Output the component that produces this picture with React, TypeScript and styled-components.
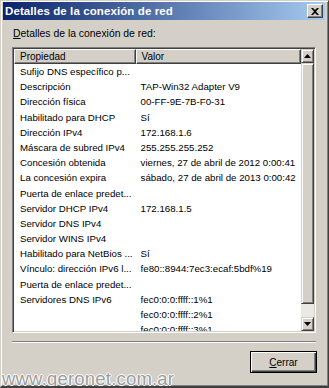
import styled, { createGlobalStyle } from "styled-components";

const rows: [string, string][] = [
  ["Sufijo DNS específico p...", ""],
  ["Descripción", "TAP-Win32 Adapter V9"],
  ["Dirección física", "00-FF-9E-7B-F0-31"],
  ["Habilitado para DHCP", "Sí"],
  ["Dirección IPv4", "172.168.1.6"],
  ["Máscara de subred IPv4", "255.255.255.252"],
  ["Concesión obtenida", "viernes, 27 de abril de 2012 0:00:41"],
  ["La concesión expira", "sábado, 27 de abril de 2013 0:00:42"],
  ["Puerta de enlace predet...", ""],
  ["Servidor DHCP IPv4", "172.168.1.5"],
  ["Servidor DNS IPv4", ""],
  ["Servidor WINS IPv4", ""],
  ["Habilitado para NetBios ...", "Sí"],
  ["Vínculo: dirección IPv6 l...", "fe80::8944:7ec3:ecaf:5bdf%19"],
  ["Puerta de enlace predet...", ""],
  ["Servidores DNS IPv6", "fec0:0:0:ffff::1%1"],
  ["", "fec0:0:0:ffff::2%1"],
  ["", "fec0:0:0:ffff::3%1"],
];

const NAME_COL = 122;
const VALUE_COL = 166;

const GlobalStyle = createGlobalStyle`
  html, body {
    margin: 0;
    padding: 0;
    background: #d4d0c8;
  }
`;

export default function App() {
  return (
    <>
      <GlobalStyle />
      <Window>
        <TitleBar>
          <Title>Detalles de la conexión de red</Title>
          <CloseButton>
            <svg width="8" height="7" viewBox="0 0 8 7">
              <path d="M0 0h2l2 2 2-2h2L5 3.5 8 7H6L4 5 2 7H0l3-3.5z" fill="#000" />
            </svg>
          </CloseButton>
        </TitleBar>
        <Body>
          <Label>
            <u>D</u>etalles de la conexión de red:
          </Label>
          <ListView>
            <ListArea>
              <HeaderRow>
                <HeaderCell $width={NAME_COL}>Propiedad</HeaderCell>
                <HeaderCell $width={VALUE_COL}>Valor</HeaderCell>
              </HeaderRow>
              <Rows>
                {rows.map(([name, value], i) => (
                  <Row key={i}>
                    <Cell $width={NAME_COL}>{name}</Cell>
                    <Cell $width={VALUE_COL} $value>
                      {value}
                    </Cell>
                  </Row>
                ))}
              </Rows>
            </ListArea>
            <ScrollBar>
              <ArrowButton>
                <svg width="7" height="4" viewBox="0 0 7 4">
                  <path d="M3.5 0L7 4H0z" fill="#000" />
                </svg>
              </ArrowButton>
              <Thumb />
              <Track />
              <ArrowButton>
                <svg width="7" height="4" viewBox="0 0 7 4">
                  <path d="M0 0h7L3.5 4z" fill="#000" />
                </svg>
              </ArrowButton>
            </ScrollBar>
          </ListView>
          <Separator />
          <Footer>
            <Watermark>www.geronet.com.ar</Watermark>
            <DefaultButton>
              <u>C</u>errar
            </DefaultButton>
          </Footer>
        </Body>
      </Window>
    </>
  );
}

const Window = styled.div`
  width: 329px;
  height: 388px;
  box-sizing: border-box;
  display: flex;
  flex-direction: column;
  background: #d4d0c8;
  border-top: 1px solid #d4d0c8;
  border-left: 1px solid #d4d0c8;
  border-right: 1px solid #404040;
  border-bottom: 2px solid #404040;
  box-shadow: inset 1px 1px 0 #fff, inset -1px -1px 0 #808080;
  padding: 1px 3px 0 2px;
  font-family: "Liberation Sans", Arial, sans-serif;
  overflow: hidden;
`;

const TitleBar = styled.div`
  height: 18px;
  flex: none;
  display: flex;
  align-items: center;
  justify-content: space-between;
  padding: 0 2px 0 2px;
  background: linear-gradient(to right, #0a246a, #a6caf0);
`;

const Title = styled.div`
  color: #fff;
  font-weight: bold;
  font-size: 11.5px;
  letter-spacing: 0.1px;
`;

const CloseButton = styled.div`
  width: 14px;
  height: 12px;
  display: flex;
  align-items: center;
  justify-content: center;
  background: #d4d0c8;
  border: 1px solid;
  border-color: #fff #404040 #404040 #fff;
  box-shadow: inset -1px -1px 0 #808080;
`;

const Body = styled.div`
  flex: 1;
  display: flex;
  flex-direction: column;
  padding: 8px 9px 0 9px;
`;

const Label = styled.div`
  font-size: 10.4px;
  color: #000;
  height: 12px;
  line-height: 12px;
  margin-bottom: 7px;
  margin-left: 1px;
`;

const ListView = styled.div`
  height: 286px;
  flex: none;
  display: flex;
  box-sizing: border-box;
  border: 1px solid;
  border-color: #808080 #fff #fff #808080;
  box-shadow: inset 1px 1px 0 #404040, inset -1px -1px 0 #d4d0c8;
  padding: 1px;
  background: #fff;
`;

const ListArea = styled.div`
  flex: 1;
  overflow: hidden;
  display: flex;
  flex-direction: column;
`;

const HeaderRow = styled.div`
  display: flex;
  height: 15px;
  flex: none;
  background: #d4d0c8;
`;

const HeaderCell = styled.div<{ $width: number }>`
  width: ${(p) => p.$width}px;
  box-sizing: border-box;
  border: 1px solid;
  border-color: #fff #404040 #404040 #fff;
  box-shadow: inset -1px -1px 0 #808080;
  font-size: 10px;
  line-height: 13px;
  padding-left: 5px;
  color: #000;
  white-space: nowrap;
  overflow: hidden;
`;

const Rows = styled.div`
  flex: 1;
  overflow: hidden;
`;

const Row = styled.div`
  display: flex;
  height: 15.2px;
  line-height: 15.2px;
`;

const Cell = styled.div<{ $width: number; $value?: boolean }>`
  width: ${(p) => p.$width}px;
  padding-left: ${(p) => (p.$value ? "5px" : "6px")};
  box-sizing: border-box;
  font-size: ${(p) => (p.$value ? "9.7px" : "9.7px")};
  color: #000;
  white-space: nowrap;
  overflow: hidden;
`;

const ScrollBar = styled.div`
  width: 13px;
  flex: none;
  display: flex;
  flex-direction: column;
`;

const ArrowButton = styled.div`
  height: 14px;
  flex: none;
  box-sizing: border-box;
  display: flex;
  align-items: center;
  justify-content: center;
  background: #d4d0c8;
  border: 1px solid;
  border-color: #d4d0c8 #404040 #404040 #d4d0c8;
  box-shadow: inset 1px 1px 0 #fff, inset -1px -1px 0 #808080;
`;

const Thumb = styled.div`
  height: 241px;
  flex: none;
  box-sizing: border-box;
  background: #d4d0c8;
  border: 1px solid;
  border-color: #d4d0c8 #404040 #404040 #d4d0c8;
  box-shadow: inset 1px 1px 0 #fff, inset -1px -1px 0 #808080;
`;

const Track = styled.div`
  flex: 1;
  background: #ebe9e4;
`;

const Separator = styled.div`
  margin-top: 8px;
  height: 0;
  border-top: 1px solid #808080;
  border-bottom: 1px solid #fff;
`;

const Footer = styled.div`
  flex: 1;
  display: flex;
  justify-content: space-between;
  align-items: flex-start;
  padding-top: 8px;
`;

const Watermark = styled.div`
  align-self: flex-end;
  margin-left: -10px;
  margin-bottom: -3px;
  font-family: "Liberation Sans", Arial, sans-serif;
  font-size: 18.5px;
  line-height: 20px;
  color: #9c9c9c;
  letter-spacing: 0.2px;
  text-shadow: 1px 0 0 #fff, -1px 0 0 #fff, 0 1px 0 #fff, 0 -1px 0 #fff;
`;

const DefaultButton = styled.div`
  width: 67px;
  height: 22px;
  box-sizing: border-box;
  display: flex;
  align-items: center;
  justify-content: center;
  background: #d4d0c8;
  border: 1px solid #000;
  box-shadow: inset 1px 1px 0 #fff, inset -1px -1px 0 #404040, inset -2px -2px 0 #808080;
  font-size: 10px;
  color: #000;
  margin-right: -1px;
`;
